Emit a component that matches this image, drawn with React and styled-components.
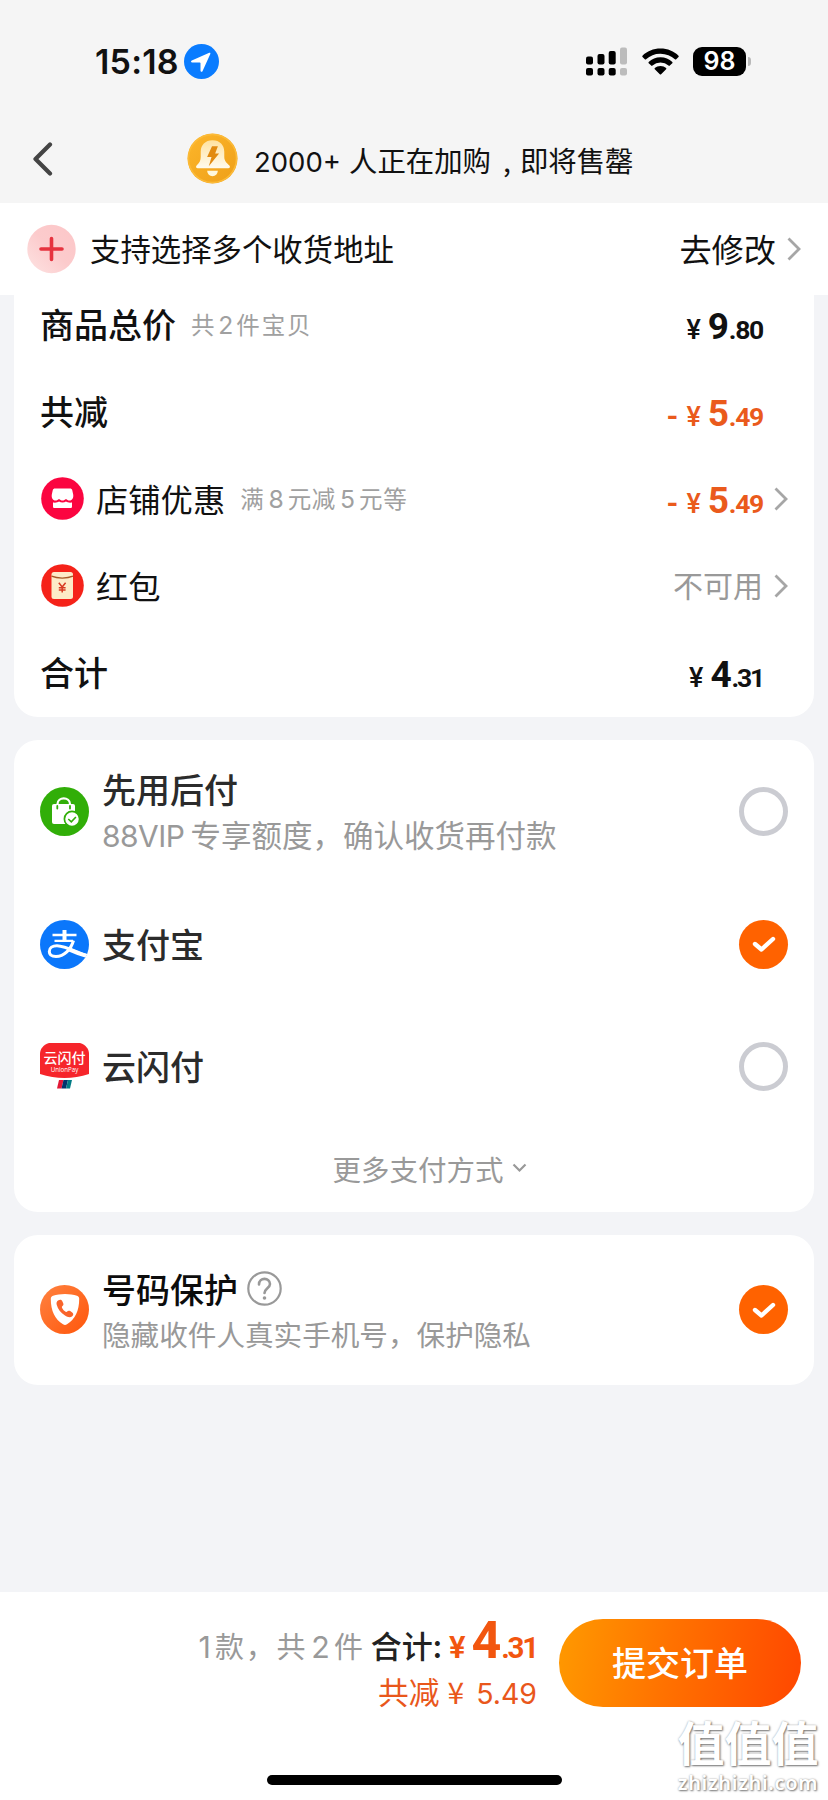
import React from 'react';
import styled, { createGlobalStyle, css } from 'styled-components';

const GlobalStyle = createGlobalStyle`
  * {
    box-sizing: border-box;
  }

  body {
    margin: 0;
    background: #f3f4f7;
    color: #111;
  }

  svg {
    display: block;
    flex: none;
  }
`;

const Page = styled.div`
  position: relative;
  width: 828px;
  height: 1800px;
  display: flex;
  flex-direction: column;
  overflow: hidden;
  white-space: nowrap;
  font-family: 'Noto Sans CJK SC', sans-serif;
`;

const Top = styled.header`
  height: 203px;
  background: #f5f5f5;
`;

const StatusBar = styled.div`
  height: 122px;
  padding: 0 77px 0 95px;
  display: flex;
  align-items: center;
`;

const Clock = styled.span`
  width: 89px;
  padding-top: 2px;
  font: 600 34px/40px Inter, sans-serif;
  letter-spacing: 0.2px;
`;

const StatusIcons = styled.div`
  margin-left: auto;
  display: flex;
  align-items: center;
  gap: 14px;
`;

const Battery = styled.div`
  display: flex;
  align-items: center;
  gap: 2px;
`;

const BatteryLevel = styled.span`
  width: 53px;
  height: 29px;
  border-radius: 9px;
  background: #000;
  color: #fff;
  text-align: center;
  font: 600 25px/29px Inter, sans-serif;
`;

const BatteryTip = styled.span`
  width: 3px;
  height: 9px;
  border-radius: 0 4px 4px 0;
  background: #b9b9b9;
`;

const NavBar = styled.div`
  height: 73px;
  padding-left: 32px;
  display: flex;
  align-items: center;
`;

const NavTitle = styled.div`
  margin-left: 134px;
  display: flex;
  align-items: center;
  gap: 16px;
  font-size: 28.4px;
  line-height: 40px;
`;

const NavText = styled.span`
  padding-top: 4px;
`;

const NavCount = styled.span`
  margin-right: 8px;
  font-family: Inter, sans-serif;
  font-size: 27.5px;
`;

const NavComma = styled.span`
  margin: 0 9px 0 12px;
`;

const AddressBar = styled.div`
  height: 92px;
  padding: 0 27px;
  display: flex;
  align-items: center;
  background: #fff;
  font-size: 30.4px;
`;

const AddressText = styled.span`
  margin-left: 13px;
  padding-bottom: 2px;
`;

const AddressAction = styled.span`
  margin-left: auto;
  padding-bottom: 2px;
  font-size: 32.2px;
`;

const Card = styled.section`
  margin: 0 14px 23px;
  border-radius: ${({ $flatTop }) => ($flatTop ? '0 0 24px 24px' : '24px')};
  background: #fff;
`;

// The list is scrolled, its first rows sit under the address bar.
const SummaryCard = styled(Card)`
  height: 436px;
  margin-top: -14px;
  display: grid;
  grid-template-rows: repeat(5, 87px);
`;

const SummaryRow = styled.div`
  padding: 0 26px;
  display: flex;
  align-items: center;

  & > svg {
    margin-left: 1px;
  }
`;

const Label = styled.span`
  margin-left: ${({ $icon }) => ($icon ? '12px' : 0)};
  padding-bottom: 1px;
  font-size: ${({ $bold }) => ($bold ? '34px' : '32.3px')};
  font-weight: ${({ $bold }) => ($bold ? 500 : 400)};
  line-height: 44px;
`;

const Hint = styled.span`
  margin-left: 15px;
  font-size: 23.5px;
  line-height: 34px;
  letter-spacing: ${({ $spacing }) => $spacing || 0}px;
  color: #a0a0a0;
`;

// Latin runs inside Chinese text
const Latin = styled.span`
  margin: 0 ${({ $after }) => ($after === undefined ? 4 : $after)}px 0 ${({ $before }) => $before || 0}px;
  font-family: Inter, sans-serif;
  font-size: ${({ $size }) => $size || '1.05em'};
  letter-spacing: ${({ $tight }) => ($tight ? '-0.5px' : 0)};
`;

const RowValue = styled.div`
  margin-left: auto;
  display: flex;
  align-items: center;
`;

const ChevronSlot = styled.div`
  width: 25px;
  display: flex;
  justify-content: flex-end;
`;

const Unavailable = styled.span`
  padding-bottom: 3px;
  font-size: 30px;
  color: #999;
`;

const PriceBox = styled.span`
  display: flex;
  align-items: baseline;
  font-family: Roboto, sans-serif;
  font-weight: 700;
  line-height: 44px;
  color: ${({ $tone }) => $tone || '#111'};
  ${({ $large }) =>
    !$large &&
    css`
      padding-top: 8px;
    `}
`;

const Minus = styled.span`
  font-size: 30px;
  margin-right: 8px;
`;

const Yen = styled.span`
  font-size: ${({ $large }) => ($large ? 31 : 27)}px;
  font-weight: ${({ $large }) => ($large ? 600 : 500)};
  margin-right: ${({ $large }) => ($large ? 6 : 7)}px;
`;

const Whole = styled.span`
  font-size: ${({ $large }) => ($large ? 52 : 37)}px;
  letter-spacing: -0.2px;
`;

const Cents = styled.span`
  font-size: ${({ $large }) => ($large ? 29.5 : 26.5)}px;
  letter-spacing: ${({ $narrow }) => ($narrow ? '-2.2px' : '-1.3px')};
`;

const PayRow = styled.div`
  height: ${({ $height }) => $height}px;
  padding: 0 26px;
  display: flex;
  align-items: center;
`;

const PayBody = styled.div`
  margin-left: 14px;
  padding-top: ${({ $tall }) => ($tall ? 4 : 0)}px;
  display: flex;
  flex-direction: column;
`;

const PayTitle = styled.span`
  display: flex;
  align-items: center;
  gap: 9px;
  margin-left: -1px;
  font-size: 34px;
  font-weight: 500;
  line-height: 44px;
  color: ${({ $dark }) => ($dark ? '#0c0c0c' : '#2b2b2b')};
`;

const PayNote = styled.span`
  margin-left: -1px;
  font-size: ${({ $size }) => $size}px;
  line-height: 46px;
  color: #999;
`;

const Radio = styled.span`
  width: 49px;
  height: 49px;
  margin-left: auto;
  border-radius: 50%;
  display: flex;
  align-items: center;
  justify-content: center;
  ${({ $checked }) =>
    $checked
      ? css`
          background: #ff6200;
        `
      : css`
          border: 5px solid #cbccd2;
        `}
`;

const PayCard = styled(Card)`
  height: 472px;
  padding-top: 10px;
`;

const ProtectCard = styled(Card)`
  height: 150px;
`;

const MoreMethods = styled.div`
  height: 104px;
  padding-left: 31px;
  display: flex;
  align-items: center;
  justify-content: center;
  gap: 8px;
  font-size: 28.5px;
  color: #999;
`;

const Footer = styled.footer`
  height: 208px;
  margin-top: auto;
  padding: 27px 27px 0 0;
  display: flex;
  flex-direction: column;
  background: #fff;
`;

const Checkout = styled.div`
  height: 88px;
  display: flex;
  justify-content: flex-end;
  gap: 22px;
`;

const Totals = styled.div`
  display: flex;
  flex-direction: column;
  align-items: flex-end;
`;

const TotalLine = styled.div`
  height: 50px;
  display: flex;
  align-items: baseline;
`;

const Count = styled.span`
  font-size: 29px;
  letter-spacing: 1.8px;
  color: #999;
`;

const TotalLabel = styled.span`
  margin: 0 7px 0 6px;
  font-size: 31px;
  font-weight: 500;
  color: #222;
`;

const Saved = styled.div`
  font-size: 30.8px;
  line-height: 44px;
  color: #e9571b;
`;

const SavedYen = styled.span`
  margin: 0 12px 0 8px;
  font-size: 30px;
`;

const Submit = styled.button`
  width: 242px;
  height: 88px;
  border: 0;
  padding: 0 0 3px;
  border-radius: 44px;
  background: linear-gradient(100deg, #ff9600 4%, #ff7200 45%, #ff4a00 96%);
  color: #fff;
  font: 500 34px 'Noto Sans CJK SC', sans-serif;
`;

const HomeIndicator = styled.div`
  width: 295px;
  height: 10px;
  margin: 68px 0 0 267px;
  border-radius: 5px;
  background: #000;
`;

const Watermark = styled.div`
  position: absolute;
  right: 8px;
  bottom: 5px;
  width: 144px;
  display: flex;
  flex-direction: column;
  align-items: center;
  color: #fff;
  text-shadow: 1px 1px 2px #777, 0 0 2px #aaa;
`;

const WatermarkName = styled.span`
  padding-bottom: 4px;
  font-size: 47px;
  font-weight: 700;
  line-height: 52px;
`;

const WatermarkSite = styled.span`
  font: 600 20px/24px 'Noto Sans', sans-serif;
  letter-spacing: 0.7px;
`;

function Chevron() {
  return (
    <svg width="14" height="24" viewBox="0 0 14 24" fill="none" stroke="#a6a6a6" strokeWidth="2.8">
      <path d="M1.5 1.5 12 12 1.5 22.5" />
    </svg>
  );
}

function LocationIcon() {
  return (
    <svg width="35" height="35" viewBox="0 0 35 35">
      <circle cx="17.5" cy="17.5" r="17.5" fill="#0a7cff" />
      <path
        d="M25.3 8.8 7.8 16.5c-1.2.6-.9 2 .4 2h7.6c.5 0 .7.2.7.7v7.4c0 1.4 1.5 1.7 2.1.4L26.3 10c.3-.9-.2-1.5-1-1.2Z"
        fill="#fff"
      />
    </svg>
  );
}

function SignalIcon() {
  return (
    <svg width="42" height="29" viewBox="0 0 42 29">
      <rect x="0" y="9.5" width="7" height="8" rx="2" />
      <rect x="11.5" y="7" width="7" height="10.5" rx="2" />
      <rect x="22.7" y="4" width="7" height="13.5" rx="2" />
      <rect x="34" y="0.5" width="7" height="17" rx="2" fill="#bcbcbc" />
      <rect x="0" y="21" width="7" height="7.5" rx="2" />
      <rect x="11.5" y="21" width="7" height="7.5" rx="2" />
      <rect x="22.7" y="21" width="7" height="7.5" rx="2" />
      <rect x="34" y="21" width="7" height="7.5" rx="2" fill="#bcbcbc" />
    </svg>
  );
}

function WifiIcon() {
  return (
    <svg width="37" height="27" viewBox="0 0 37 27">
      <path d="M18.5 0.5C11.4.5 5 3.2.5 7.7c-.4.4-.4.9 0 1.3l2.3 2.3c.4.4 1 .4 1.3 0A20.4 20.4 0 0 1 18.5 5.7c5.6 0 10.7 2.2 14.4 5.6.4.4.9.4 1.3 0L36.5 9c.4-.4.4-.9 0-1.3C32 3.2 25.6.5 18.5.5Z" />
      <path d="M18.5 9.3c-4.6 0-8.7 1.8-11.8 4.6-.4.4-.4 1 0 1.3l2.5 2.4c.4.4.9.4 1.3 0a12 12 0 0 1 16 0c.4.4.9.4 1.3 0l2.5-2.4c.4-.3.4-.9 0-1.3-3.1-2.8-7.2-4.6-11.8-4.6Z" />
      <path d="M18.5 18c-2.2 0-4.2.8-5.7 2-.4.4-.4 1 0 1.3l5 4.9c.4.4.9.4 1.3 0l5-4.9c.4-.4.4-.9 0-1.3-1.4-1.2-3.4-2-5.6-2Z" />
    </svg>
  );
}

function BackIcon() {
  return (
    <svg
      width="21"
      height="34"
      viewBox="0 0 21 34"
      fill="none"
      stroke="#444"
      strokeWidth="4.2"
      strokeLinecap="round"
      strokeLinejoin="round"
    >
      <path d="M18 2.5 3.5 17 18 31.5" />
    </svg>
  );
}

function BellIcon() {
  return (
    <svg width="51" height="51" viewBox="0 0 52 52">
      <defs>
        <linearGradient id="bellBg" x1="0" y1="0" x2="1" y2="1">
          <stop offset="0" stopColor="#fdb62a" />
          <stop offset="1" stopColor="#ee9f19" />
        </linearGradient>
        <linearGradient id="bellBody" x1="0" y1="0" x2="0" y2="1">
          <stop offset="0" stopColor="#ffe2a0" />
          <stop offset="1" stopColor="#fffbee" />
        </linearGradient>
      </defs>
      <circle cx="26" cy="26" r="25.5" fill="url(#bellBg)" />
      <circle cx="26" cy="26" r="24.5" fill="none" stroke="#fcbb38" strokeWidth="1.5" />
      <path
        d="M26 7.5c-7.5 0-12 5-12 11.5v5.5c0 4-1.5 6-4 8.5-1.4 1.4-.8 3 1 3h31c1.8 0 2.4-1.6 1-3-2.5-2.5-5-4.5-5-8.5V19c0-6.5-4.5-11.5-12-11.5Z"
        fill="url(#bellBody)"
      />
      <path d="M20.5 38.5h11c-.3 3.6-2.5 5.5-5.5 5.5s-5.2-1.9-5.5-5.5Z" fill="#fff8dc" />
      <path d="M25.5 13.5h6l-2.8 7.5h4l-10.5 13 2.8-9.5H20.5Z" fill="#e28b10" />
    </svg>
  );
}

function PlusIcon() {
  return (
    <svg width="50" height="50" viewBox="0 0 50 50">
      <defs>
        <linearGradient id="plusBg" x1="0" y1="1" x2="1" y2="0">
          <stop offset="0" stopColor="#fde3e3" />
          <stop offset="0.5" stopColor="#fccbcc" />
          <stop offset="1" stopColor="#fcc6c8" />
        </linearGradient>
      </defs>
      <circle cx="24.5" cy="25" r="24.2" fill="url(#plusBg)" />
      <path d="M24.5 14.5v21M14 25h21" stroke="#e6333f" strokeWidth="3.6" strokeLinecap="round" />
    </svg>
  );
}

function ShopIcon() {
  return (
    <svg width="43" height="43" viewBox="0 0 43 43">
      <circle cx="21.5" cy="21.5" r="21.3" fill="#fb0540" />
      <path
        d="M14 11.5h15c1.2 0 1.8.5 2.2 1.5l1 4.500c.5 3.500-1 6-3.700 6-1.500 0-2.500-.6-3.500-1.500-1 .9-2.200 1.500-3.500 1.500s-2.500-.6-3.500-1.500c-1 .9-2 1.500-3.500 1.500-2.700 0-4.200-2.500-3.700-6l1-4.500c.4-1 1-1.500 2.200-1.500Z"
        fill="#fff"
      />
      <path
        d="M12 25.5c2.5.4 4.6 0 6-1 2 1.3 5 1.3 7 0 1.4 1 3.5 1.4 6 1v4c0 1-.6 1.500-1.500 1.500h-16c-.9 0-1.500-.5-1.500-1.500Z"
        fill="#fff"
      />
    </svg>
  );
}

function RedPacketIcon() {
  return (
    <svg width="43" height="43" viewBox="0 0 43 43">
      <circle cx="21.5" cy="21.5" r="21.3" fill="#f52219" />
      <rect x="10.5" y="8" width="21.5" height="27" rx="2.5" fill="#fdebc8" />
      <path d="M10.5 12.2c6 2.500 15.500 2.500 21.500 0" fill="none" stroke="#a85a28" strokeWidth="1.3" />
      <path
        d="m17.8 18.8 3.4 4.2 3.4-4.2M21.2 23v5.500M17.8 23.700h6.800M17.8 26h6.800"
        fill="none"
        stroke="#d83a22"
        strokeWidth="1.5"
      />
    </svg>
  );
}

function BagIcon() {
  return (
    <svg width="49" height="49" viewBox="0 0 49 49">
      <circle cx="24.5" cy="24.5" r="24.5" fill="#31ae08" />
      <path d="M17.5 18v-1c0-7.500 12.500-7.500 12.500 0v1" fill="none" stroke="#fff" strokeWidth="2.2" />
      <rect x="12" y="17" width="23" height="20" rx="2" fill="#fff" />
      <path d="M17.3 19v2.500M30 19v2.500" stroke="#31ae08" strokeWidth="1.8" strokeLinecap="round" />
      <circle cx="32" cy="32" r="7.6" fill="#fff" stroke="#31ae08" strokeWidth="1.7" />
      <path d="m28.3 32 3 2.800 4.600-4.800" fill="none" stroke="#31ae08" strokeWidth="1.6" />
    </svg>
  );
}

function AlipayIcon() {
  return (
    <svg width="49" height="49" viewBox="0 0 49 49" fill="none" stroke="#fff">
      <defs>
        <clipPath id="alipayClip">
          <circle cx="24.5" cy="24.5" r="24.5" />
        </clipPath>
      </defs>
      <circle cx="24.5" cy="24.5" r="24.5" fill="#0b77fb" stroke="none" />
      <g clipPath="url(#alipayClip)">
        <path d="M24.5 10v11" strokeWidth="4" />
        <path d="M12.5 15h24M14.5 20.8h18.500" strokeWidth="2.3" />
        <path
          d="M33.5 20.5C31 29.500 24 36.500 16 36.500c-4.500 0-6.700-2.200-6.700-5 0-3.600 3.200-5.700 7.700-5.700 7.500 0 17 5.200 31.500 10.700"
          strokeWidth="3"
        />
        <path d="M29 29.5c6 2.800 12 5 19 6.800" strokeWidth="4" />
      </g>
    </svg>
  );
}

function QuickPassIcon() {
  return (
    <svg width="49" height="49" viewBox="0 0 49 49">
      <path d="M9 1h31c6 2 9 6 9 11v20q-24.500 8-49 0V12C0 7 3 3 9 1Z" fill="#f6252b" />
      <text
        x="24.5"
        y="21"
        fill="#fff"
        fontSize="14"
        fontWeight="500"
        textAnchor="middle"
        fontFamily="Noto Sans CJK SC, sans-serif"
      >
        云闪付
      </text>
      <text x="24.5" y="29.8" fill="#fff" fontSize="6.2" textAnchor="middle" fontFamily="Open Sans, sans-serif">
        UnionPay
      </text>
      <path d="M19 38h4.500l-2 8.500H17Z" fill="#e21836" />
      <path d="M23.5 38H28l-2 8.500h-4.500Z" fill="#00336c" />
      <path d="M28 38h4l-2 8.500h-4Z" fill="#007b84" />
    </svg>
  );
}

function ShieldPhoneIcon() {
  return (
    <svg width="49" height="49" viewBox="0 0 49 49">
      <defs>
        <linearGradient id="shieldBg" x1="0" y1="0" x2="1" y2="1">
          <stop offset="0" stopColor="#ff8240" />
          <stop offset="1" stopColor="#ff560b" />
        </linearGradient>
      </defs>
      <circle cx="24.5" cy="24.5" r="24.5" fill="url(#shieldBg)" />
      <path
        d="M25 9c4.500 0 8.500.7 12 1.800 1.500.5 2.200 1.500 2.200 3C39.200 26 35 34.500 27 39.300c-1.400.9-2.600.9-4 0C15 34.500 10.800 26 10.800 13.800c0-1.500.7-2.500 2.200-3C16.500 9.700 20.500 9 25 9Z"
        fill="#fff"
      />
      <path
        d="M18.5 15.2c1.500-1 3-.6 3.700.9l1 2.200c.5 1.200.2 2.200-.9 3-.5.4-.5.9-.2 1.600.8 1.600 2 2.900 3.500 3.900.7.4 1.200.3 1.600-.2.7-1 1.800-1.200 3-.5l2 1.300c1.300.9 1.400 2.300.3 3.500-1.800 1.800-4.500 1.700-7.500-.3-4.300-2.800-7.300-6.800-8.300-10.900-.5-2-.1-3.500 1.800-4.500Z"
        fill="#f9642b"
      />
    </svg>
  );
}

function QuestionIcon() {
  return (
    <svg width="35" height="35" viewBox="0 0 35 35" fill="none" stroke="#999">
      <circle cx="17.5" cy="17.5" r="16.2" strokeWidth="2.2" />
      <path d="M12 13.5c0-7.500 11-7.300 11-.5 0 4-5.500 4.500-5.500 9" strokeWidth="2.6" strokeLinecap="round" />
      <circle cx="17.5" cy="27" r="1.8" fill="#999" stroke="none" />
    </svg>
  );
}

function Price({ whole, cents, minus, tone, large }) {
  return (
    <PriceBox $tone={tone} $large={large}>
      {minus && <Minus>-</Minus>}
      <Yen $large={large}>¥</Yen>
      <Whole $large={large}>{whole}</Whole>
      <Cents $large={large} $narrow={cents.includes('1')}>
        .{cents}
      </Cents>
    </PriceBox>
  );
}

function Check({ checked }) {
  return (
    <Radio $checked={checked}>
      {checked && (
        <svg
          width="24"
          height="20"
          viewBox="0 0 24 20"
          fill="none"
          stroke="#fff"
          strokeWidth="4.4"
          strokeLinecap="round"
          strokeLinejoin="round"
        >
          <path d="m3 10 6.5 5.500L21 5" />
        </svg>
      )}
    </Radio>
  );
}

const orange = '#ea5a1c';

const summary = [
  {
    label: '商品总价',
    bold: true,
    hint: (
      <>
        共<Latin $before={2} $after={3}>2</Latin>件宝贝
      </>
    ),
    spacing: 1.8,
    price: { whole: 9, cents: '80' },
  },
  { label: '共减', bold: true, price: { whole: 5, cents: '49', minus: true, tone: orange } },
  {
    label: '店铺优惠',
    icon: <ShopIcon />,
    hint: (
      <>
        满<Latin $before={4}>8</Latin>元减<Latin $before={4}>5</Latin>元等
      </>
    ),
    spacing: 0.7,
    price: { whole: 5, cents: '49', minus: true, tone: orange },
    link: true,
  },
  { label: '红包', icon: <RedPacketIcon />, link: true },
  { label: '合计', bold: true, price: { whole: 4, cents: '31' } },
];

const methods = [
  {
    title: '先用后付',
    note: (
      <>
        <Latin $tight $after={6} $size="30px">
          88VIP
        </Latin>
        专享额度，确认收货再付款
      </>
    ),
    icon: <BagIcon />,
    height: 122,
  },
  { title: '支付宝', icon: <AlipayIcon />, height: 144, checked: true },
  { title: '云闪付', icon: <QuickPassIcon />, height: 100 },
];

export default function App() {
  return (
    <Page>
      <GlobalStyle />
      <Top>
        <StatusBar>
          <Clock>15:18</Clock>
          <LocationIcon />
          <StatusIcons>
            <SignalIcon />
            <WifiIcon />
            <Battery>
              <BatteryLevel>98</BatteryLevel>
              <BatteryTip />
            </Battery>
          </StatusIcons>
        </StatusBar>
        <NavBar>
          <BackIcon />
          <NavTitle>
            <BellIcon />
            <NavText>
              <NavCount>2000+</NavCount>
              人正在加购<NavComma>,</NavComma>即将售罄
            </NavText>
          </NavTitle>
        </NavBar>
      </Top>
      <AddressBar>
        <PlusIcon />
        <AddressText>支持选择多个收货地址</AddressText>
        <AddressAction>去修改</AddressAction>
        <ChevronSlot>
          <Chevron />
        </ChevronSlot>
      </AddressBar>

      <SummaryCard $flatTop>
        {summary.map(({ label, bold, icon, hint, spacing, price, link }) => (
          <SummaryRow key={label}>
            {icon}
            <Label $bold={bold} $icon={!!icon}>
              {label}
            </Label>
            {hint && <Hint $spacing={spacing}>{hint}</Hint>}
            <RowValue>
              {price ? <Price {...price} /> : <Unavailable>不可用</Unavailable>}
              <ChevronSlot>{link && <Chevron />}</ChevronSlot>
            </RowValue>
          </SummaryRow>
        ))}
      </SummaryCard>

      <PayCard>
        {methods.map(({ title, note, icon, height, checked }) => (
          <PayRow key={title} $height={height}>
            {icon}
            <PayBody $tall={!!note}>
              <PayTitle>{title}</PayTitle>
              {note && <PayNote $size={30.5}>{note}</PayNote>}
            </PayBody>
            <Check checked={checked} />
          </PayRow>
        ))}
        <MoreMethods>
          更多支付方式
          <svg width="15" height="10" viewBox="0 0 15 10" fill="none" stroke="#999" strokeWidth="2.2">
            <path d="m1.5 1.5 6 6 6-6" />
          </svg>
        </MoreMethods>
      </PayCard>

      <ProtectCard>
        <PayRow $height={149}>
          <ShieldPhoneIcon />
          <PayBody $tall>
            <PayTitle $dark>
              号码保护
              <QuestionIcon />
            </PayTitle>
            <PayNote $size={28.6}>隐藏收件人真实手机号，保护隐私</PayNote>
          </PayBody>
          <Check checked />
        </PayRow>
      </ProtectCard>

      <Footer>
        <Checkout>
          <Totals>
            <TotalLine>
              <Count>
                <Latin $after={4}>1</Latin>款，共<Latin $before={4}>2</Latin>件
              </Count>
              <TotalLabel>合计:</TotalLabel>
              <Price whole={4} cents="31" tone="#f2560f" large />
            </TotalLine>
            <Saved>
              共减<SavedYen>¥</SavedYen>
              <Latin $after={0} $size="28.5px">
                5.49
              </Latin>
            </Saved>
          </Totals>
          <Submit>提交订单</Submit>
        </Checkout>
        <HomeIndicator />
      </Footer>

      <Watermark>
        <WatermarkName>值值值</WatermarkName>
        <WatermarkSite>zhizhizhi.com</WatermarkSite>
      </Watermark>
    </Page>
  );
}
